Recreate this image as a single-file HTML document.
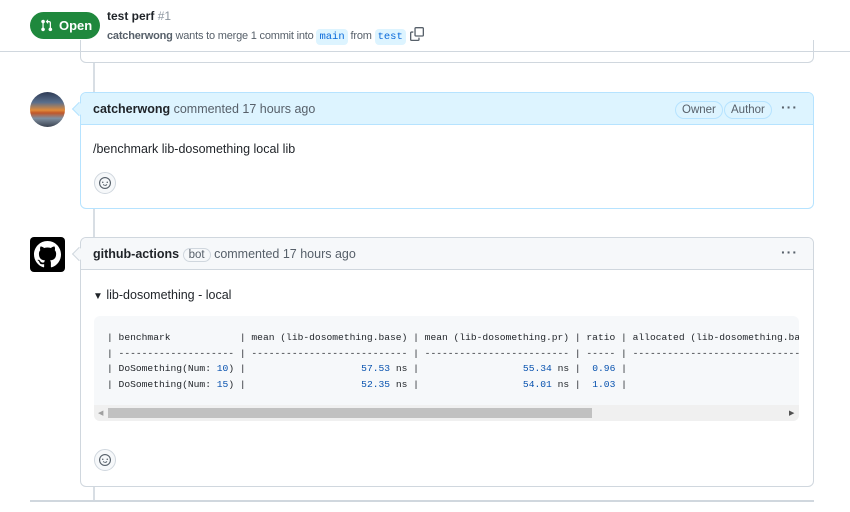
<!DOCTYPE html>
<html><head><meta charset="utf-8"><style>
*{box-sizing:border-box;margin:0;padding:0}
body{width:850px;height:512px;background:#fff;font-family:"Liberation Sans",sans-serif;color:#1f2328;position:relative;overflow:hidden;font-size:13px}
.abs{position:absolute}
.mono{font-family:"Liberation Mono",monospace}
.badge{position:absolute;border:1px solid #b6e3ff;border-radius:10px;font-size:11.5px;color:#57606a;padding:1px 6px;line-height:14px}
.dots{position:absolute;font-size:14px;color:#57606a;letter-spacing:1px;font-weight:bold}
.emoji{position:absolute;width:22px;height:22px;border:1px solid #d0d7de;border-radius:50%;background:#f6f8fa}
pre{font-family:"Liberation Mono",monospace;font-size:9.65px;line-height:15.5px;color:#1f2328;white-space:pre}
.n{color:#0550ae}
.chip{font-family:"Liberation Mono",monospace;background:#ddf4ff;color:#0969da;padding:2px 3px;border-radius:4px;font-size:10.5px;letter-spacing:0}
</style></head><body>
<!-- header -->
<div class="abs" style="left:30px;top:12px;width:70px;height:27px;background:#1f883d;border-radius:14px;color:#fff;font-weight:bold;font-size:13px;line-height:27px;padding-left:29px">Open</div>
<svg class="abs" style="left:40px;top:19px" width="13" height="13" viewBox="0 0 16 16" fill="#fff"><path d="M1.5 3.25a2.25 2.25 0 1 1 3 2.12v5.26a2.25 2.25 0 1 1-1.5 0V5.37A2.25 2.25 0 0 1 1.5 3.25Zm5.677-.177L9.573.677A.25.25 0 0 1 10 .854V2.5h1A2.5 2.5 0 0 1 13.5 5v5.628a2.25 2.25 0 1 1-1.5 0V5a1 1 0 0 0-1-1h-1v1.646a.25.25 0 0 1-.427.177L7.177 3.427a.25.25 0 0 1 0-.354Z"/></svg>
<div class="abs" style="left:107px;top:9px;font-size:12px;font-weight:bold">test perf <span style="font-weight:normal;color:#8c959f">#1</span></div>
<div class="abs" style="left:107px;top:27px;font-size:11px;letter-spacing:-0.2px;color:#57606a;line-height:14px;white-space:nowrap"><b style="color:#57606a">catcherwong</b> wants to merge 1 commit into <span class="chip">main</span> from <span class="chip">test</span><svg style="vertical-align:-2px;margin-left:4px" width="14" height="14" viewBox="0 0 16 16" fill="#57606a"><path d="M0 6.75C0 5.784.784 5 1.75 5h1.5a.75.75 0 0 1 0 1.5h-1.5a.25.25 0 0 0-.25.25v7.5c0 .138.112.25.25.25h7.5a.25.25 0 0 0 .25-.25v-1.5a.75.75 0 0 1 1.5 0v1.5A1.75 1.75 0 0 1 9.25 16h-7.5A1.75 1.75 0 0 1 0 14.25Z"/><path d="M5 1.75C5 .784 5.784 0 6.75 0h7.5C15.216 0 16 .784 16 1.75v7.5A1.75 1.75 0 0 1 14.25 11h-7.5A1.75 1.75 0 0 1 5 9.25Zm1.75-.25a.25.25 0 0 0-.25.25v7.5c0 .138.112.25.25.25h7.5a.25.25 0 0 0 .25-.25v-7.5a.25.25 0 0 0-.25-.25Z"/></svg></div>
<div class="abs" style="left:0;top:51px;width:850px;height:1px;background:#d0d7de"></div>
<!-- top partial box -->
<div class="abs" style="left:80px;top:40px;width:734px;height:23px;border:1px solid #d0d7de;border-top:none;border-radius:0 0 6px 6px"></div>
<!-- timeline -->
<div class="abs" style="left:93px;top:63px;width:2px;height:437px;background:#d8dee4"></div>
<!-- comment 1 -->
<div class="abs" style="left:30px;top:92px;width:35px;height:35px;border-radius:50%;background:linear-gradient(180deg,#2d3a55 0%,#5a6f8c 30%,#e08a3a 52%,#c0572a 60%,#7f8fa0 75%,#3a4250 100%)"></div>
<div class="abs" style="left:80px;top:92px;width:734px;height:117px;border:1px solid #b6e3ff;border-radius:6px;background:#fff"></div>
<div class="abs" style="left:81px;top:93px;width:732px;height:32px;background:#ddf4ff;border-bottom:1px solid #b6e3ff;border-radius:5px 5px 0 0"></div>
<div class="abs" style="left:74px;top:104px;width:10px;height:10px;background:#ddf4ff;border-left:1px solid #b6e3ff;border-bottom:1px solid #b6e3ff;transform:rotate(45deg)"></div>
<div class="abs" style="left:93px;top:102px;font-size:12.5px;color:#57606a"><b style="color:#1f2328">catcherwong</b> commented 17 hours ago</div>
<div class="badge" style="left:675px;top:101px">Owner</div>
<div class="badge" style="left:724px;top:101px">Author</div>
<div class="dots" style="left:781px;top:99px">···</div>
<div class="abs" style="left:93px;top:142px;font-size:12.5px">/benchmark lib-dosomething local lib</div>
<div class="emoji" style="left:94px;top:172px"></div>
<svg class="abs" style="left:99px;top:177px" width="12" height="12" viewBox="0 0 16 16" fill="#57606a"><path d="M8 0a8 8 0 1 1 0 16A8 8 0 0 1 8 0ZM1.5 8a6.5 6.5 0 1 0 13 0 6.5 6.5 0 0 0-13 0Zm3.82 1.636a.75.75 0 0 1 1.038.175c.103.118.22.222.35.31.264.178.683.37 1.285.37.602 0 1.02-.192 1.285-.371.13-.088.247-.192.35-.31a.75.75 0 0 1 1.222.87c-.16.166-.338.316-.53.445-.63.418-1.37.638-2.127.629-.946 0-1.652-.308-2.126-.63a3.331 3.331 0 0 1-.715-.657.75.75 0 0 1 .183-1.044ZM12 7a1 1 0 1 1-2 0 1 1 0 0 1 2 0ZM5 8a1 1 0 1 1 0-2 1 1 0 0 1 0 2Z"/></svg>
<!-- comment 2 -->
<div class="abs" style="left:30px;top:237px;width:35px;height:35px;border-radius:4px;background:#000"></div>
<svg class="abs" style="left:34px;top:241px" width="27" height="27" viewBox="0 0 16 16" fill="#fff"><path d="M8 0c4.42 0 8 3.58 8 8a8.013 8.013 0 0 1-5.45 7.59c-.4.08-.55-.17-.55-.38 0-.27.01-1.13.01-2.2 0-.75-.25-1.23-.54-1.48 1.78-.2 3.65-.88 3.65-3.95 0-.88-.31-1.59-.82-2.15.08-.2.36-1.02-.08-2.12 0 0-.67-.22-2.2.82-.64-.18-1.32-.27-2-.27-.68 0-1.36.09-2 .27-1.53-1.03-2.2-.82-2.2-.82-.44 1.1-.16 1.92-.08 2.12-.51.56-.82 1.28-.82 2.15 0 3.06 1.86 3.75 3.64 3.95-.23.2-.44.55-.51 1.07-.46.21-1.61.55-2.33-.66-.15-.24-.6-.83-1.23-.82-.67.01-.27.38.01.53.34.19.73.9.82 1.13.16.45.68 1.31 2.69.94 0 .67.01 1.3.01 1.49 0 .21-.15.45-.55.38A7.995 7.995 0 0 1 0 8c0-4.42 3.58-8 8-8Z"/></svg>
<div class="abs" style="left:80px;top:237px;width:734px;height:250px;border:1px solid #d0d7de;border-radius:6px;background:#fff"></div>
<div class="abs" style="left:81px;top:238px;width:732px;height:32px;background:#f6f8fa;border-bottom:1px solid #d0d7de;border-radius:5px 5px 0 0"></div>
<div class="abs" style="left:74px;top:249px;width:10px;height:10px;background:#f6f8fa;border-left:1px solid #d0d7de;border-bottom:1px solid #d0d7de;transform:rotate(45deg)"></div>
<div class="abs" style="left:93px;top:247px;font-size:12.5px;color:#57606a"><b style="color:#1f2328">github-actions</b> <span style="border:1px solid #d0d7de;border-radius:10px;padding:0 5px;font-size:11.5px">bot</span> commented 17 hours ago</div>
<div class="dots" style="left:781px;top:244px">···</div>
<div class="abs" style="left:93px;top:288px;font-size:12.5px"><span style="font-size:10px">▼</span> lib-dosomething - local</div>
<div class="abs" style="left:94px;top:316px;width:705px;height:105px;background:#f6f8fa;border-radius:6px;overflow:hidden">
<pre style="position:absolute;left:13px;top:14px">| benchmark            | mean (lib-dosomething.base) | mean (lib-dosomething.pr) | ratio | allocated (lib-dosomething.base) |
| -------------------- | --------------------------- | ------------------------- | ----- | -------------------------------- |
| DoSomething(Num: <span class="n">10</span>) |                    <span class="n">57.53</span> ns |                  <span class="n">55.34</span> ns |  <span class="n">0.96</span> |                              <span class="n">128</span> B |
| DoSomething(Num: <span class="n">15</span>) |                    <span class="n">52.35</span> ns |                  <span class="n">54.01</span> ns |  <span class="n">1.03</span> |                              <span class="n">128</span> B |</pre>
<div class="abs" style="left:0;top:89px;width:705px;height:16px;background:#f0f0f0"></div>
<div class="abs" style="left:14px;top:92px;width:484px;height:10px;background:#c1c1c1"></div>
<div class="abs" style="left:4px;top:93px;font-size:7px;color:#a0a0a0">◀</div>
<div class="abs" style="left:695px;top:93px;font-size:7px;color:#505050">▶</div>
</div>
<div class="emoji" style="left:94px;top:449px"></div>
<svg class="abs" style="left:99px;top:454px" width="12" height="12" viewBox="0 0 16 16" fill="#57606a"><path d="M8 0a8 8 0 1 1 0 16A8 8 0 0 1 8 0ZM1.5 8a6.5 6.5 0 1 0 13 0 6.5 6.5 0 0 0-13 0Zm3.82 1.636a.75.75 0 0 1 1.038.175c.103.118.22.222.35.31.264.178.683.37 1.285.37.602 0 1.02-.192 1.285-.371.13-.088.247-.192.35-.31a.75.75 0 0 1 1.222.87c-.16.166-.338.316-.53.445-.63.418-1.37.638-2.127.629-.946 0-1.652-.308-2.126-.63a3.331 3.331 0 0 1-.715-.657.75.75 0 0 1 .183-1.044ZM12 7a1 1 0 1 1-2 0 1 1 0 0 1 2 0ZM5 8a1 1 0 1 1 0-2 1 1 0 0 1 0 2Z"/></svg>
<div class="abs" style="left:30px;top:500px;width:784px;height:2px;background:#d0d7de"></div>
</body></html>
